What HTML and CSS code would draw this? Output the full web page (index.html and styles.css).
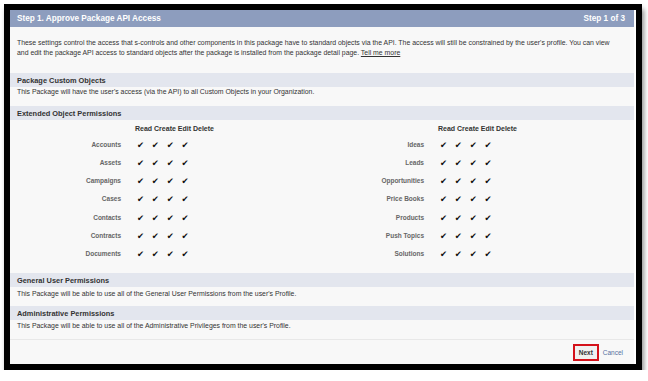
FILE: index.html
```html
<!DOCTYPE html>
<html lang="en">
<head>
  <meta charset="UTF-8"/>
  <title>Approve Package API Access</title>
  <link rel="stylesheet" href="styles.css">
</head>
<body>
<div class="frame">
  <div class="block">
    <div class="block_head">
      <span>Step 1. Approve Package API Access</span>
      <span>Step 1 of 3</span>
    </div>

    <div class="intro">
      These settings control the access that s-controls and other components in this package have to standard objects via the API. The access will still be constrained by the user's profile. You can view<br>
      and edit the package API access to standard objects after the package is installed from the package detail page. <a href="#" class="link">Tell me more</a>
    </div>

    <div class="band">Package Custom Objects</div>
    <div class="desc desc_gap">This Package will have the user's access (via the API) to all Custom Objects in your Organization.</div>

    <div class="band">Extended Object Permissions</div>
    <div class="perm">
      <div></div><div class="perm_head">Read Create Edit Delete</div>
      <div></div><div class="perm_head">Read Create Edit Delete</div>

      <div class="perm_label">Accounts</div><div class="checks">✔ ✔ ✔ ✔</div>
      <div class="perm_label">Ideas</div><div class="checks">✔ ✔ ✔ ✔</div>

      <div class="perm_label">Assets</div><div class="checks">✔ ✔ ✔ ✔</div>
      <div class="perm_label">Leads</div><div class="checks">✔ ✔ ✔ ✔</div>

      <div class="perm_label">Campaigns</div><div class="checks">✔ ✔ ✔ ✔</div>
      <div class="perm_label">Opportunities</div><div class="checks">✔ ✔ ✔ ✔</div>

      <div class="perm_label">Cases</div><div class="checks">✔ ✔ ✔ ✔</div>
      <div class="perm_label">Price Books</div><div class="checks">✔ ✔ ✔ ✔</div>

      <div class="perm_label">Contacts</div><div class="checks">✔ ✔ ✔ ✔</div>
      <div class="perm_label">Products</div><div class="checks">✔ ✔ ✔ ✔</div>

      <div class="perm_label">Contracts</div><div class="checks">✔ ✔ ✔ ✔</div>
      <div class="perm_label">Push Topics</div><div class="checks">✔ ✔ ✔ ✔</div>

      <div class="perm_label">Documents</div><div class="checks">✔ ✔ ✔ ✔</div>
      <div class="perm_label">Solutions</div><div class="checks">✔ ✔ ✔ ✔</div>
    </div>

    <div class="band">General User Permissions</div>
    <div class="desc desc_small">This Package will be able to use all of the General User Permissions from the user's Profile.</div>

    <div class="band">Administrative Permissions</div>
    <div class="desc desc_last">This Package will be able to use all of the Administrative Privileges from the user's Profile.</div>

    <div class="footer">
      <button class="next_btn">Next</button>
      <a href="#" class="cancel">Cancel</a>
    </div>
  </div>
</div>
</body>
</html>
```

FILE: styles.css
```css
body {
    margin: 0;
    background-color: #fff;
    font-family: "Liberation Sans", Arial, sans-serif;
}

.frame {
    width: 626px;
    height: 354px;
    margin: 4px 0 0 4px;
    border: 6px solid #000;
    box-shadow: 2px 5px 5px rgba(0, 0, 0, 0.45);
    background-color: #fff;
}

.block {
    height: 100%;
    margin: 0 2px 0 0;
    background-color: #f8f8f8;
    display: flex;
    flex-direction: column;
}

.block_head {
    height: 17px;
    display: flex;
    justify-content: space-between;
    align-items: center;
    padding: 0 9px 0 7px;
    background-color: #8d9dbe;
    color: #fff;
    font-size: 8.2px;
    font-weight: bold;
}

.intro {
    padding: 11px 7px 15px 7px;
    font-size: 6.9px;
    line-height: 10px;
    color: #333;
    white-space: nowrap;
}

.link {
    color: #333;
}

.band {
    height: 14px;
    line-height: 15px;
    padding-left: 7px;
    background-color: #e3e6ee;
    color: #333;
    font-size: 7.4px;
    font-weight: bold;
}

.desc {
    padding-left: 7px;
    font-size: 6.9px;
    line-height: 10px;
    color: #333;
}

.desc_gap {
    padding-bottom: 9px;
}

.desc_small {
    padding-top: 2px;
    padding-bottom: 7px;
}

.desc_last {
    padding-top: 1px;
    padding-bottom: 8px;
    border-bottom: 1px solid #e8e8e8;
}

.perm {
    display: grid;
    grid-template-columns: 111px 202px 101px 1fr;
    grid-auto-rows: 18.17px;
    grid-template-rows: 16px;
    padding-bottom: 10px;
}

.perm_head {
    padding-left: 14px;
    line-height: 17px;
    font-size: 7px;
    font-weight: bold;
    color: #333;
}

.perm_label {
    text-align: right;
    line-height: 18px;
    font-size: 6.5px;
    font-weight: bold;
    color: #666;
}

.checks {
    padding-left: 16px;
    line-height: 18px;
    font-family: "DejaVu Sans", sans-serif;
    font-size: 8.5px;
    word-spacing: 5px;
    color: #111;
}

.footer {
    flex: 1;
    display: flex;
    justify-content: flex-end;
    align-items: center;
    gap: 4px;
    padding-right: 11px;
}

.next_btn {
    width: 26px;
    height: 17px;
    padding: 0;
    border: 2px solid #d4111a;
    background-color: #f0f0f0;
    font-family: "Liberation Sans", Arial, sans-serif;
    font-size: 6.5px;
    font-weight: bold;
    color: #333;
}

.cancel {
    font-size: 6.5px;
    color: #56719f;
    text-decoration: none;
}
```
